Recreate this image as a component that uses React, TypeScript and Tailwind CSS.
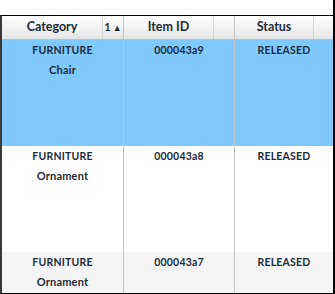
import React from "react";

type Row = { category: string; name: string; id: string; status: string; bg: string };

const ROWS: Row[] = [
  { category: "FURNITURE", name: "Chair", id: "000043a9", status: "RELEASED", bg: "bg-[#80c9ff]" },
  { category: "FURNITURE", name: "Ornament", id: "000043a8", status: "RELEASED", bg: "bg-white" },
  { category: "FURNITURE", name: "Ornament", id: "000043a7", status: "RELEASED", bg: "bg-[#f5f5f5]" },
];

function HeaderCell({ label, sort, width }: { label: string; sort?: React.ReactNode; width: string }) {
  return (
    <div className={`flex h-full ${width} shrink-0 border-r border-[#c4c4c4]`}>
      <div className="flex flex-1 items-center justify-center text-[12.5px] font-bold text-[#1c2b3a]">
        {label}
      </div>
      <div className="flex w-[21px] items-center justify-center border-l border-[#d6d6d6] text-[11px] text-[#1c2b3a]">
        {sort}
      </div>
    </div>
  );
}

export default function App() {
  return (
    <div
      className="flex h-[294px] w-[335px] flex-col bg-white"
      style={{ fontFamily: "Lato, 'Open Sans', sans-serif" }}
    >
      <div className="h-[15px] shrink-0 border-r-2 border-black" />
      <div className="flex flex-1 flex-col overflow-hidden border-y border-l-2 border-r-2 border-black border-l-[#3a3a3a]">
        {/* Header */}
        <div className="flex h-[24px] shrink-0 border-b border-[#bdbdbd] bg-gradient-to-b from-white to-[#e6e6e6]">
          <HeaderCell
            label="Category"
            width="w-[122px]"
            sort={
              <span className="flex items-center gap-[2px] font-bold">
                1<span className="text-[9px]">▲</span>
              </span>
            }
          />
          <HeaderCell label="Item ID" width="w-[111px]" />
          <HeaderCell label="Status" width="w-[100px]" />
        </div>
        {/* Body */}
        <div className="flex flex-1 flex-col">
          {ROWS.map((r, i) => (
            <div
              key={r.id}
              className={`flex ${i < 2 ? "h-[106px]" : "flex-1"} shrink-0 ${r.bg} text-[10.5px] font-bold tracking-[0.2px] text-[#1c2b3a]`}
            >
              <div className="flex w-[122px] flex-col items-center border-r border-[#c4c4c4] pt-[1px]">
                <span className="leading-[19px]">{r.category}</span>
                <span className="text-[11px] leading-[19px]">{r.name}</span>
              </div>
              <div className="flex w-[111px] justify-center border-r border-[#c4c4c4] pt-[1px] leading-[19px]">
                {r.id}
              </div>
              <div className="flex flex-1 justify-center pt-[1px] leading-[19px]">{r.status}</div>
            </div>
          ))}
        </div>
      </div>
    </div>
  );
}
